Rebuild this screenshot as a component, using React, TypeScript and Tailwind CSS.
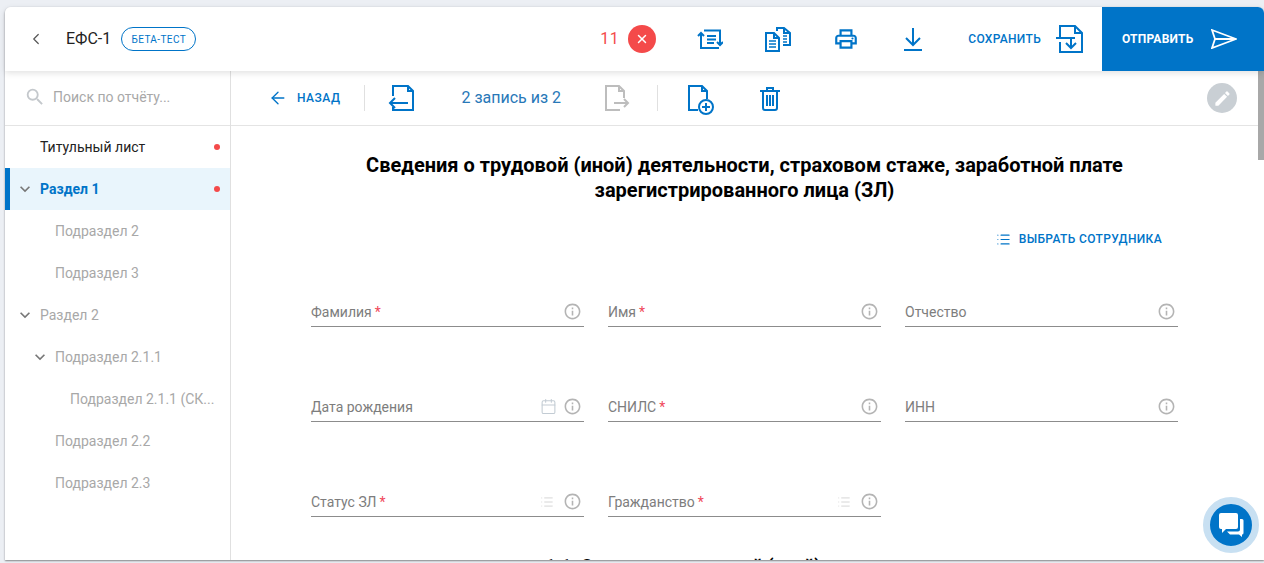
import { ArrowLeft, Calendar, ChevronLeft, List, X } from "lucide-react";
import { MdEdit, MdExpandMore, MdInfoOutline, MdOutlinePrint, MdSearch } from "react-icons/md";

const FONT = "font-['Roboto','Liberation_Sans',sans-serif]";

const NAV = [
  { label: "Титульный лист", pad: "pl-[35px]", dark: true, dot: true },
  { label: "Раздел 1", pad: "pl-[30px]", arrow: "left-[5px]", active: true, dot: true },
  { label: "Подраздел 2", pad: "pl-[50px]" },
  { label: "Подраздел 3", pad: "pl-[50px]" },
  { label: "Раздел 2", pad: "pl-[35px]", arrow: "left-[10px]" },
  { label: "Подраздел 2.1.1", pad: "pl-[50px]", arrow: "left-[25px]" },
  { label: "Подраздел 2.1.1 (СК...", pad: "pl-[65px]" },
  { label: "Подраздел 2.2", pad: "pl-[50px]" },
  { label: "Подраздел 2.3", pad: "pl-[50px]" },
];

const FIELDS = [
  { label: "Фамилия", req: true },
  { label: "Имя", req: true },
  { label: "Отчество" },
  { label: "Дата рождения", extra: "date" },
  { label: "СНИЛС", req: true },
  { label: "ИНН" },
  { label: "Статус ЗЛ", req: true, extra: "list" },
  { label: "Гражданство", req: true, extra: "list" },
];

function SortIcon() {
  return (
    <svg width="26" height="22" viewBox="0 0 26 22" fill="none" stroke="#0074c8" strokeWidth="2">
      <path d="M4 20V5M1 8l3-3 3 3" />
      <path d="M3 20h19M7 2.500h16V7M10 8h9M10 11.500h9M10 15h7M23 7v10M20 14l3 3 3-3" />
    </svg>
  );
}

function CopyIcon() {
  return (
    <svg width="28" height="26" viewBox="0 0 28 26" fill="none" stroke="#0074c8" strokeWidth="2">
      <path d="M2 7h8l5 5v13H2zM10 7v5h5" />
      <path d="M13 5V2h7l6 5v12h-7M20 2v5h6" />
      <path d="M5 15h7M5 18h7M5 21h7M19 10h4M19 13h4M19 16h4" strokeWidth="1.500" />
    </svg>
  );
}

function DownloadIcon() {
  return (
    <svg width="18" height="24" viewBox="0 0 18 24" fill="none" stroke="#0074c8" strokeWidth="2">
      <path d="M9 1v17M2 11l7 7 7-7M0 23h18" />
    </svg>
  );
}

function SaveIcon() {
  return (
    <svg width="28" height="30" viewBox="0 0 28 30" fill="none" stroke="#0074c8" strokeWidth="2">
      <path d="M5 13V2h15l7 7v19H5V18" />
      <path d="M20 2v7h7M1 14h19M16 14v10M11 19l5 5 5-5" />
    </svg>
  );
}

function PrevDocIcon() {
  return (
    <svg width="26" height="27" viewBox="0 0 26 27" fill="none" stroke="#0074c8" strokeWidth="2">
      <path d="M5 11V1h15l5 5v19H5v-3" />
      <path d="M20 1v5h5M20 18H2M7 13l-5 5 5 5" />
    </svg>
  );
}

function NextDocIcon() {
  return (
    <svg width="26" height="27" viewBox="0 0 26 27" fill="none" stroke="#bdbdbd" strokeWidth="2">
      <path d="M20 13V6l-5-5H2v24h14" />
      <path d="M15 1v5h5M10 18h14M20 14l4 4-4 4" />
    </svg>
  );
}

function AddDocIcon() {
  return (
    <svg width="28" height="30" viewBox="0 0 28 30" fill="none" stroke="#0074c8" strokeWidth="2">
      <path d="M11 25H2V1h13l5 5v8" />
      <path d="M15 1v5h5" />
      <circle cx="19" cy="22" r="7" />
      <path d="M19 18v8M15 22h8" />
    </svg>
  );
}

function TrashIcon() {
  return (
    <svg width="20" height="25" viewBox="0 0 20 25" fill="none" stroke="#0074c8" strokeWidth="2">
      <path d="M0 5h20M7 5V2h6v3" />
      <path d="M3 5v17a2 2 0 0 0 2 2h10a2 2 0 0 0 2-2V5" />
      <path d="M7 9v11M10 9v11M13 9v11" />
    </svg>
  );
}

function Field({ label, req, extra }: { label: string; req?: boolean; extra?: string }) {
  return (
    <div className="box-content flex h-[29px] items-center border-b border-[#8c8c8c]">
      <span className="mt-[2px] text-[14px] text-[#7d7d7d]">
        {label}
        {req && <span className="ml-[3px] text-[#f0485a]">*</span>}
      </span>
      <span className="ml-auto mr-[2px] flex items-center gap-[6px]">
        {extra === "date" && <Calendar size={17} strokeWidth={1.5} className="text-[#c3ccd4]" />}
        {extra === "list" && <List size={14} strokeWidth={1.3} className="mr-[3px] text-[#c9c9c9]" />}
        <MdInfoOutline size={19} className="text-[#b4b4b4]" />
      </span>
    </div>
  );
}

export default function App() {
  return (
    <div className={`${FONT} h-[563px] w-[1264px] overflow-hidden bg-[#eceff4] pb-[3px] pl-[5px] pt-[7px]`}>
      <div className="relative flex h-full flex-col rounded-t-[6px] bg-white shadow-[0_1px_2px_rgba(0,0,0,0.45)]">
        <header className="z-10 flex h-[64px] shrink-0 items-center overflow-hidden rounded-t-[6px] bg-white shadow-[0_2px_6px_rgba(0,0,0,0.12)]">
          <ChevronLeft size={18} strokeWidth={1.6} className="ml-[22px] text-[#555]" />
          <span className="ml-[21px] text-[16px] text-[#222]">ЕФС-1</span>
          <span className="ml-[10px] flex h-[24px] w-[75px] items-center justify-center rounded-full border border-[#0074c8] text-[10px] tracking-[0.4px] text-[#0074c8]">
            БЕТА-ТЕСТ
          </span>
          <span className="ml-[404px] w-[18px] text-[16px] tracking-[0.5px] text-[#f44a4a]">11</span>
          <span className="ml-[10px] flex h-[28px] w-[28px] items-center justify-center rounded-full bg-[#f44a4a]">
            <X size={14} strokeWidth={2.5} className="text-white" />
          </span>
          <span className="ml-[41px]"><SortIcon /></span>
          <span className="ml-[41px]"><CopyIcon /></span>
          <MdOutlinePrint size={26} className="ml-[41px] text-[#0074c8]" />
          <span className="ml-[45px]"><DownloadIcon /></span>
          <span className="ml-[46px] text-[12px] font-medium tracking-[0.3px] text-[#0074c8]">СОХРАНИТЬ</span>
          <span className="ml-[14px]"><SaveIcon /></span>
          <button className="ml-auto flex h-full w-[162px] items-center bg-[#0074c8] pl-[20px] text-[12px] font-bold tracking-[0.2px] text-white">
            ОТПРАВИТЬ
            <svg width="26" height="20" viewBox="0 0 26 20" fill="none" stroke="white" strokeWidth="1.8" className="ml-[18px]">
              <path d="M1 1l24 9L1 19l3-9zM4 10h21" />
            </svg>
          </button>
        </header>

        <div className="flex min-h-0 flex-1 overflow-hidden">
          <aside className="w-[226px] shrink-0 border-r border-[#e0e0e0]">
            <div className="flex h-[55px] items-center border-b border-[#e4e4e4] pb-[2px] pl-[19px]">
              <MdSearch size={22} className="text-[#c4c8cc]" />
              <span className="ml-[7px] text-[14px] text-[#a8a8a8]">Поиск по отчёту...</span>
            </div>
            {NAV.map((n) => (
              <div
                key={n.label}
                className={`relative flex h-[42px] items-center text-[14px] ${n.pad} ${n.active ? "border-l-[5px] border-[#0074c8] bg-[#e9f5fc] font-bold text-[#0074c8]" : n.dark ? "text-[#222]" : "text-[#a8a8a8]"}`}
              >
                {n.arrow && <MdExpandMore size={20} className={`absolute text-[#777] ${n.arrow}`} />}
                {n.label}
                {n.dot && <span className="absolute right-[10px] h-[6px] w-[6px] rounded-full bg-[#f44a4a]" />}
              </div>
            ))}
          </aside>

          <main className="relative min-w-0 flex-1 overflow-hidden pr-[6px]">
            <div className="flex h-[55px] items-center border-b border-[#e4e4e4]">
              <ArrowLeft size={20} strokeWidth={1.6} className="ml-[37px] text-[#0074c8]" />
              <span className="ml-[9px] text-[12px] font-medium tracking-[0.5px] text-[#0074c8]">НАЗАД</span>
              <span className="ml-[24px] h-[26px] w-px bg-[#e0e0e0]" />
              <span className="ml-[23px]"><PrevDocIcon /></span>
              <span className="ml-[47px] text-[16px] text-[#2878b8]">2 запись из 2</span>
              <span className="ml-[43px]"><NextDocIcon /></span>
              <span className="ml-[27px] h-[26px] w-px bg-[#e0e0e0]" />
              <span className="ml-[29px] mt-[3px]"><AddDocIcon /></span>
              <span className="ml-[45px]"><TrashIcon /></span>
              <span className="ml-auto mr-[21px] flex h-[30px] w-[30px] items-center justify-center rounded-full bg-[#c9cfd4]">
                <MdEdit size={19} className="text-white" />
              </span>
            </div>

            <h1 className="mt-[27px] text-center text-[20px] font-bold leading-[25px] text-black">
              Сведения о трудовой (иной) деятельности, страховом стаже, заработной плате
              <br />
              зарегистрированного лица (ЗЛ)
            </h1>

            <div className="mr-[96px] mt-[27px] flex items-center justify-end text-[12px] font-medium tracking-[0.35px] text-[#0074c8]">
              <List size={15} strokeWidth={1.7} className="mr-[8px]" />
              ВЫБРАТЬ СОТРУДНИКА
            </div>

            <div className="ml-[80px] mr-[80px] mt-[49px] grid grid-cols-3 gap-x-[24px] gap-y-[65px]">
              {FIELDS.map((f) => (
                <Field key={f.label} {...f} />
              ))}
            </div>

            <h2 className="mt-[35px] text-center text-[18px] font-bold text-black">1.1. Сведения о трудовой (иной) деятельности</h2>

            {/* scrollbar */}
            <div className="absolute right-0 top-0 h-full w-[6px] bg-white">
              <div className="h-[89px] w-full bg-[#a8a8a8]" />
            </div>
          </main>
        </div>

        <button className="absolute bottom-[7px] right-[5px] z-20 flex h-[56px] w-[56px] items-center justify-center rounded-full border-[7px] border-[#c8e0f2] bg-[#0074c8]">
          <svg width="28" height="28" viewBox="0 0 28 28" fill="white">
            <path d="M4 2h15a2 2 0 0 1 2 2v12a2 2 0 0 1-2 2H9l-4 4v-4H4a2 2 0 0 1-2-2V4a2 2 0 0 1 2-2z" />
            <path d="M23 8h2a1.500 1.500 0 0 1 1.500 1.500V22a1.500 1.500 0 0 1-1.500 1.500v2.500l-3-2.500H13l-3-3h11a2 2 0 0 0 2-2z" />
          </svg>
        </button>
      </div>
    </div>
  );
}
